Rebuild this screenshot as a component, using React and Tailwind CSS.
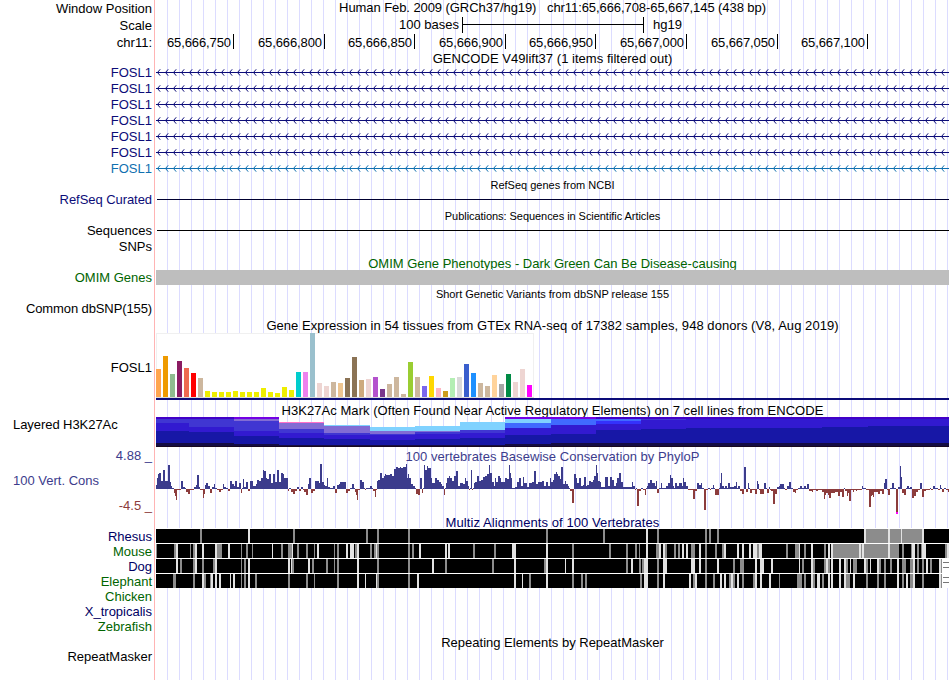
import clsx from "clsx";

const genes = ["FOSL1", "FOSL1", "FOSL1", "FOSL1", "FOSL1", "FOSL1"];

const ticks = [
    { label: "65,666,750", width: "w-[79px]" },
    { label: "65,666,800", width: "w-[91px]" },
    { label: "65,666,850", width: "w-[90px]" },
    { label: "65,666,900", width: "w-[91px]" },
    { label: "65,666,950", width: "w-[90px]" },
    { label: "65,667,000", width: "w-[91px]" },
    { label: "65,667,050", width: "w-[91px]" },
    { label: "65,667,100", width: "w-[90px]" },
];

// one [height, colour] pair per tissue
const tissues = [
    [28, "#ffa54f"], [41, "#ee9a00"], [23, "#8fbc8f"], [36, "#8b1c62"], [29, "#ee6a50"], [24, "#ff0000"], [19, "#cdb79e"],
    [6, "#eeee00"], [5, "#eeee00"], [5, "#eeee00"], [5, "#eeee00"], [6, "#eeee00"], [5, "#eeee00"], [5, "#eeee00"],
    [5, "#eeee00"], [9, "#eeee00"], [5, "#eeee00"], [4, "#eeee00"], [10, "#eeee00"], [7, "#eeee00"], [25, "#00cdcd"],
    [25, "#ee82ee"], [64, "#9ac0cd"], [14, "#eed5d2"], [11, "#eed5d2"], [15, "#cdb79e"], [14, "#eec591"], [19, "#8b7355"],
    [40, "#8b7355"], [17, "#cdaa7d"], [18, "#eed5d2"], [20, "#b452cd"], [8, "#7a378b"], [13, "#cdb79e"], [20, "#cdb79e"],
    [3, "#cdb79e"], [35, "#9acd32"], [20, "#cdb79e"], [11, "#7a67ee"], [21, "#ffd700"], [9, "#ffb6c1"], [6, "#cd9b1d"],
    [19, "#b4eeb4"], [20, "#d9d9d9"], [33, "#3a5fcd"], [24, "#1e90ff"], [14, "#cdb79e"], [11, "#cdb79e"], [22, "#ffd39b"],
    [13, "#a6a6a6"], [23, "#008b45"], [15, "#eed5d2"], [28, "#eed5d2"], [12, "#ff00ff"],
];

const VIOLET = "#4200c8";
const PURPLE = "#7400e4";
const MAUVE = "#826cd4";
const INDIGO = "#4036d2";
const BLUE = "#321ad0";
const NAVY = "#1717a6";
const DARK = "#140c44";
const SKY = "#80d2ff";
const AZURE = "#406aff";

// [start, end, ...[top, colour]]
const h3k = [
    [156, 189, [0, VIOLET], [2, INDIGO], [6, BLUE], [14, NAVY], [26, DARK]],
    [189, 234, [0, VIOLET], [2, INDIGO], [10, BLUE], [15, NAVY], [26, DARK]],
    [234, 279, [0, PURPLE], [2, MAUVE], [4, INDIGO], [14, BLUE], [19, NAVY], [27, DARK]],
    [279, 324, [5, "#ff70c8"], [6, MAUVE], [12, INDIGO], [16, BLUE], [21, NAVY], [28, DARK]],
    [324, 370, [8, SKY], [9, MAUVE], [16, INDIGO], [18, BLUE], [22, NAVY], [28, DARK]],
    [370, 415, [10, SKY], [14, MAUVE], [17, INDIGO], [18, BLUE], [23, NAVY], [28, DARK]],
    [415, 460, [9, SKY], [14, MAUVE], [15, INDIGO], [17, BLUE], [22, NAVY], [28, DARK]],
    [460, 505, [5, SKY], [13, INDIGO], [16, BLUE], [21, NAVY], [28, DARK]],
    [505, 551, [0, PURPLE], [2, SKY], [6, AZURE], [11, BLUE], [18, NAVY], [27, DARK]],
    [551, 596, [0, PURPLE], [2, AZURE], [8, BLUE], [17, NAVY], [26, DARK]],
    [596, 641, [0, VIOLET], [2, AZURE], [4, "#3432fc"], [7, BLUE], [13, NAVY], [26, DARK]],
    [641, 686, [0, VIOLET], [2, INDIGO], [3, BLUE], [12, NAVY], [26, DARK]],
    [686, 822, [0, VIOLET], [2, BLUE], [11, NAVY], [26, DARK]],
    [822, 868, [0, VIOLET], [2, BLUE], [10, NAVY], [26, DARK]],
    [868, 949, [0, VIOLET], [2, BLUE], [9, NAVY], [26, DARK]],
];

// start:score in thirds of a pixel along the axis, each score holds until the next start
const phyloLeft =
    "18:4 21:11 24:15 27:16 33:8 39:19 45:8 54:24 60:7 63:3 66:1 72:-4 75:-7 78:-11 81:-1 93:8 99:2 105:1 108:-3 114:-5 120:-1 132:2 138:4 141:14 147:2 150:-1 159:-9 162:-5 165:4 168:6 174:3 180:-4 186:2 192:5 195:1 200:-1 207:-3 213:-1 219:5 222:2 228:1 234:-2 240:8 246:5 252:3 255:8 261:2 267:6 273:-4 276:1 279:10 282:2 288:7 294:-2 300:8 309:3 318:5 321:9 327:8 333:11 339:19 342:18 348:11 351:10 357:15 363:6 369:15 375:7 381:19 387:7 393:16 399:15 402:11 414:-2 417:1 423:-3 429:-5 435:-2 441:2 447:-2 453:2 459:-1 462:-3 468:-6 474:5 477:11 483:-4 489:-2 495:8 507:6 510:25 516:7 522:4 525:3 531:11 534:2 540:1 549:3 555:-4 561:4 567:5 570:7 588:-4 594:-2 600:1 606:5 612:1 615:-3 618:-6 621:-11 624:-1 630:9 636:7 642:1 645:-1 648:1 660:3 666:1 669:-2 675:-8 678:-1 681:8 684:9 690:16 696:11 702:13 705:15 708:14 720:15 726:13 732:20 738:22 744:21 750:22 753:21 759:22 768:25 771:11 774:15 777:11 783:5 789:3 795:1 798:-5 804:-6 810:11 816:-4 819:1 822:24 825:19 831:23 834:21 843:11 846:6 855:11 861:9 867:7 873:5 876:3 882:-6 885:1 888:6 891:11 897:13 900:11 906:8 912:13 918:18 924:3 930:6 939:5 945:11 948:8 954:3 957:-1 960:1 963:19 966:-1 969:1 972:6 975:7 981:13 987:8 993:9 999:12 1005:13 1011:15 1017:24 1020:16 1026:7 1032:3 1035:11 1038:7 1044:13 1050:11 1053:7 1065:11 1071:10 1077:24 1080:16 1083:11 1086:1 1095:2 1101:7 1107:11 1113:3 1119:12 1122:6 1131:2 1137:6 1146:7 1152:18 1158:5 1164:7 1176:8 1182:3 1188:7 1194:3";
const phyloRight =
    "0:11 3:7 9:9 12:15 18:17 21:15 24:13 30:10 33:22 39:5 45:8 48:5 54:3 57:1 60:-2 66:-14 72:15 78:11 81:6 87:11 93:3 99:4 102:12 108:3 111:4 117:8 123:7 129:9 132:13 138:24 141:16 144:8 150:7 153:2 165:12 174:3 180:12 186:9 192:3 198:6 201:11 207:16 213:7 219:2 246:7 249:3 255:-1 258:1 261:-17 267:-2 273:1 279:-1 285:-6 288:1 291:3 294:6 300:9 306:6 315:3 318:8 321:-4 327:1 333:6 336:1 348:3 354:6 360:14 363:11 369:3 372:1 375:6 381:3 387:6 396:3 400:11 403:7 408:3 414:-1 429:-10 435:-2 441:6 447:4 453:6 456:1 462:-21 468:-1 474:1 480:-1 483:1 489:4 492:1 495:-6 507:1 510:6 513:16 516:3 522:1 525:3 531:1 534:6 540:2 552:3 558:7 561:1 564:3 570:-2 576:-5 582:22 588:-3 594:6 597:1 600:-4 606:-1 615:-5 621:8 624:5 627:-1 630:-5 642:6 648:1 651:-4 657:2 660:-1 663:-2 669:-15 675:-5 681:2 687:3 690:5 702:1 705:-1 711:3 717:7 723:1 729:-3 735:-4 738:-1 744:1 750:3 756:1 762:3 768:1 771:5 777:-2 786:-3 789:-1 798:-2 804:-1 816:-3 822:-10 825:-6 828:-4 834:-6 837:-9 843:-4 855:-3 864:-7 870:-3 876:-8 882:1 885:-2 891:-7 894:-4 897:-12 903:-1 909:-3 912:-1 918:-2 921:-1 936:3 939:1 948:-1 957:-18 963:-7 966:-6 969:-8 972:-3 984:-5 990:-2 996:-5 1002:6 1005:10 1011:-1 1014:-6 1020:1 1026:6 1032:1 1038:-25 1044:2 1050:23 1053:12 1056:-4 1062:-6 1068:1 1071:3 1077:1 1080:2 1086:-9 1092:-7 1098:-3 1104:-1 1110:6 1116:-8 1122:-2 1128:-1 1140:1 1143:-1 1150:3 1156:1 1164:-1 1170:4 1173:1 1176:-3 1182:1 1188:-1 1194:-3 1197:0";

function parseScores(text, origin) {
    return text.split(" ").map((item) => {
        const [x, score] = item.split(":").map(Number);
        return { x: origin + Math.round(x / 3), score };
    });
}

const phylo = [...parseScores(phyloLeft, 150), ...parseScores(phyloRight, 550)];

// start,width then g (grey) or w (near white) for every unaligned stretch
const alignments = [
    {
        name: "Rhesus",
        end: 949,
        marks: "200,2g 248,2w 293,2g 366,2g 377,2g 408,2g 546,2g 603,2g 646,2w 657,2g 705,2g 709,2g 717,2g 864,2w 866,22g 888,2w 890,11g 901,1w 902,20g 922,2w",
    },
    {
        name: "Mouse",
        end: 949,
        marks: "156,1g 174,2g 176,2w 190,1g 193,2g 195,2w 202,2w 215,2w 217,5g 228,2w 241,1g 246,2g 252,1g 272,1w 281,2g 288,4g 292,1w 297,2g 306,2g 314,1g 317,2w 334,1g 337,2g 346,2w 350,4w 355,2g 357,2w 370,2g 374,2g 376,1w 377,2g 408,2g 412,2g 419,2w 445,2w 448,2w 473,2g 494,2g 512,4w 546,2w 572,2g 609,2g 626,2g 635,2g 639,1g 646,2w 656,3g 659,2w 663,2w 665,2g 674,2g 678,2g 682,2w 686,2w 691,4g 699,2w 705,2g 715,2g 722,2g 724,2w 737,2w 742,2w 749,2w 753,4w 757,2g 759,3w 786,2g 795,4g 799,1w 804,2g 811,2w 824,2g 828,2w 831,2w 833,26g 859,2w 861,1g 862,2w 864,24g 888,2w 890,9g 902,2g 911,1g 912,3w 917,2g 921,1g 922,4w 945,2g 947,2w",
    },
    {
        name: "Dog",
        end: 942,
        marks: "176,2w 180,2g 193,2g 195,2w 202,2g 213,2g 215,2w 241,1g 244,2g 248,2w 288,2w 291,1w 292,2g 308,2w 312,2g 326,2g 334,1g 337,2g 357,2w 377,2g 408,2g 432,2w 445,2g 492,2g 514,2w 544,2g 546,2w 565,1w 572,2w 626,2g 631,2w 639,2g 642,2g 644,4w 657,2g 663,4w 691,4w 699,2w 705,2g 717,2w 733,2g 740,4g 755,2w 760,4w 771,2w 799,1w 802,2g 811,2w 813,2g 824,2g 826,2w 828,2g 831,2w 839,2w 844,2w 846,2g 850,1w 853,4g 864,2w 866,2g 870,1w 877,2w 879,2g 884,2g 890,2g 897,2w 902,4g 910,3g 913,2w 917,2g 922,2g 926,2w 930,2g 939,2w 941,1g",
    },
    {
        name: "Elephant",
        end: 942,
        marks: "173,3g 193,2g 202,2w 204,2g 210,1g 211,2w 215,2w 219,2w 230,1w 233,2w 241,1g 244,2g 248,2w 255,2g 288,2g 306,2g 314,1g 337,2g 357,2w 365,1w 376,1w 377,2g 408,2g 417,2w 514,2w 522,1w 529,2g 546,2w 572,2g 581,2g 585,2g 640,2g 644,4w 657,2g 663,2w 689,2w 693,2g 695,2w 705,2g 713,2g 720,2w 724,2w 729,2g 731,2w 733,2g 737,2w 742,2g 753,2g 755,2w 760,2w 769,2w 779,1g 797,5g 804,2g 811,2w 813,2g 817,3w 822,2g 828,2w 831,2w 839,2w 844,2w 846,4g 853,2w 866,2g 877,2g 884,2g 897,2w 902,2g 906,2w 910,3g 913,2w 922,2g 939,2w 941,1g",
    },
];

function Row({ label, labelClass, className, children }) {
    return (
        <div className={clsx("flex", className)}>
            <div className={clsx("w-[154px] shrink-0 whitespace-pre pr-[2px] text-right", labelClass)}>{label}</div>
            <div className="w-[796px] shrink-0 border-l border-[#ffb4b4] bg-[repeating-linear-gradient(90deg,#dcdcff_0_1px,transparent_1px_12px)] bg-[position:12px_0] bg-no-repeat">
                {children}
            </div>
        </div>
    );
}

function Title({ children, className }) {
    return <div className={clsx("whitespace-pre text-center", className)}>{children}</div>;
}

function Introns() {
    let chevrons = "";
    for (let x = 157; x < 947; x += 8) {
        chevrons += `M${x + 3.2} 5.3L${x + 0.5} 8.5L${x + 3.2} 11.7`;
    }
    return (
        <svg className="block h-4 w-[794px]" viewBox="155 0 794 16" fill="none" stroke="currentColor">
            <path d="M156 8.5H949" />
            <path d={chevrons} />
        </svg>
    );
}

function Expression() {
    return (
        <svg className="block h-[67px] w-[794px]" viewBox="155 0 794 67" shapeRendering="crispEdges">
            <rect x="156" y="0" width="378" height="65" fill="#f0f0f0" />
            <rect x="157" y="1" width="376" height="63" fill="#fff" />
            <rect x="156" y="64" width="378" height="1" fill="#d8d8d8" />
            {tissues.map(([height, color], i) => (
                <rect key={i} x={156 + i * 7} y={64 - height} width="5" height={height} fill={color} />
            ))}
            <rect x="156" y="65" width="793" height="2" fill="#0c0c78" />
        </svg>
    );
}

function Histone() {
    return (
        <svg className="mt-px block h-[30px] w-[794px]" viewBox="155 0 794 30" shapeRendering="crispEdges">
            {h3k.map(([start, end, ...layers]) =>
                layers.map(([top, color]) => (
                    <rect key={`${start}-${top}`} x={start} y={top} width={end - start} height={30 - top} fill={color} />
                ))
            )}
            <rect x="156" y="29" width="793" height="1" fill="#180820" />
        </svg>
    );
}

function Conservation() {
    return (
        <svg className="block h-[52px] w-[794px]" viewBox="155 0 794 52" shapeRendering="crispEdges">
            {phylo.slice(0, -1).map(({ x, score }, i) => (
                <rect
                    key={i}
                    x={x}
                    y={score > 0 ? 27 - score : 27}
                    width={phylo[i + 1].x - x}
                    height={Math.abs(score)}
                    fill={score > 0 ? "#3c3c8c" : "#8c3c3c"}
                />
            ))}
            <rect x="896" y="50" width="2" height="2" fill="#ff00ff" />
        </svg>
    );
}

function Alignment({ marks, end }) {
    return (
        <svg className="block h-[15px] w-[794px]" viewBox="155 0 794 15" shapeRendering="crispEdges">
            <rect x="156" y="0" width={end - 156} height="15" fill="#fff" />
            <rect x="156" y="1" width={end - 156} height="14" fill="#000" />
            {marks.split(" ").map((mark) => {
                const [x, width] = mark.split(",");
                return (
                    <rect key={mark} x={x} y="1" width={parseInt(width)} height="14" fill={mark.endsWith("g") ? "#8c8c8c" : "#e2e2e2"} />
                );
            })}
            {end < 949 && (
                <>
                    <rect x={end} y="0" width={949 - end} height="15" fill="#fff" />
                    <path d="M943 4.5H949M943 9.5H949" stroke="#777" />
                </>
            )}
        </svg>
    );
}

export default function App() {
    return (
        <div className="h-[680px] w-[950px] overflow-hidden bg-white font-['Liberation_Sans',Arial,sans-serif] text-[13px] leading-[18px] text-black">
            <Row label="Window Position" className="h-[17px]">
                <Title className="leading-4 tracking-[-0.075px]">{"Human Feb. 2009 (GRCh37/hg19)   chr11:65,666,708-65,667,145 (438 bp)"}</Title>
            </Row>
            <Row label="Scale" className="h-4">
                <div className="flex leading-4">
                    <div className="w-[304px] text-right">100 bases</div>
                    <svg className="ml-[3px] h-4 w-[182px]" viewBox="0 0 182 16" stroke="#000" fill="none">
                        <path d="M0.5 0V16M181.5 0V16M0 7.5H182" />
                    </svg>
                    <div className="ml-[9px]">hg19</div>
                </div>
            </Row>
            <Row label="chr11:" labelClass="pt-px" className="h-[17px]">
                <div className="flex pt-px leading-[18px] tracking-[-0.1px]">
                    {ticks.map((tick) => (
                        <div key={tick.label} className={clsx("h-[15px] shrink-0 border-r border-black pr-[2px] text-right", tick.width)}>
                            {tick.label}
                        </div>
                    ))}
                </div>
            </Row>
            <Row className="h-[14px]">
                <Title className="tracking-[0.03px]">GENCODE V49lift37 (1 items filtered out)</Title>
            </Row>
            {genes.map((gene, i) => (
                <Row key={i} label={gene} className="h-4 text-[#0c0c78]">
                    <Introns />
                </Row>
            ))}
            <Row label="FOSL1" className="h-4 text-[#1070b0]">
                <Introns />
            </Row>

            <Row className="h-[15px]">
                <Title className="pt-px text-[11px] leading-4">RefSeq genes from NCBI</Title>
            </Row>
            <Row label="RefSeq Curated" labelClass="text-[#0c0c78] tracking-[-0.06px]" className="h-4">
                <div className="ml-[2px] mr-px h-[9px] border-b border-[#000030]" />
            </Row>
            <Row className="h-[15px]">
                <Title className="pt-px text-[11px] leading-4 tracking-[-0.05px]">Publications: Sequences in Scientific Articles</Title>
            </Row>
            <Row label="Sequences" className="h-4">
                <div className="ml-[2px] mr-px h-[9px] border-b border-black" />
            </Row>
            <Row label="SNPs" className="h-[17px]" />

            <Row className="h-[14px]">
                <Title className="text-[#006400]">OMIM Gene Phenotypes - Dark Green Can Be Disease-causing</Title>
            </Row>
            <Row label="OMIM Genes" labelClass="text-[#006400]" className="h-[17px]">
                <div className="ml-px mr-px mt-px h-[15px] bg-[#bebebe]" />
            </Row>
            <Row className="h-[14px]">
                <Title className="text-[11px] leading-4">Short Genetic Variants from dbSNP release 155</Title>
            </Row>
            <Row label="Common dbSNP(155)" labelClass="tracking-[-0.11px]" className="h-[17px]" />

            <Row className="h-4">
                <Title className="tracking-[0.055px]">Gene Expression in 54 tissues from GTEx RNA-seq of 17382 samples, 948 donors (V8, Aug 2019)</Title>
            </Row>
            <Row label="FOSL1" labelClass="pt-[26px]" className="h-[69px]">
                <Expression />
            </Row>

            <Row className="h-[14px]">
                <Title className="tracking-[0.05px]">H3K27Ac Mark (Often Found Near Active Regulatory Elements) on 7 cell lines from ENCODE</Title>
            </Row>
            <Row label="Layered H3K27Ac" labelClass="pl-[13px] tracking-[-0.06px] !text-left" className="h-8">
                <Histone />
            </Row>

            <Row label="4.88 _" labelClass="-mt-px" className="h-[14px] text-[#3c3c8c]">
                <Title className="tracking-[0.045px]">100 vertebrates Basewise Conservation by PhyloP</Title>
            </Row>
            <Row
                className="h-[52px]"
                label={
                    <div className="flex flex-col gap-[7px] pt-[10px]">
                        <span className="pl-[13px] text-left text-[#3c3c8c]">100 Vert. Cons</span>
                        <span className="text-[#8c3c3c]">-4.5 _</span>
                    </div>
                }
            >
                <Conservation />
            </Row>

            <Row className="h-[14px]">
                <Title className="tracking-[0.08px] text-[#000064]">Multiz Alignments of 100 Vertebrates</Title>
            </Row>
            {alignments.map((species, i) => (
                <Row key={species.name} label={species.name} labelClass={i % 2 ? "text-[#006400]" : "text-[#000064]"} className="h-[15px]">
                    <Alignment marks={species.marks} end={species.end} />
                </Row>
            ))}
            <Row label="Chicken" labelClass="text-[#006400]" className="h-[15px]" />
            <Row label="X_tropicalis" labelClass="text-[#000064]" className="h-[15px]" />
            <Row label="Zebrafish" labelClass="text-[#006400]" className="h-4" />

            <Row className="h-[14px]">
                <Title>Repeating Elements by RepeatMasker</Title>
            </Row>
            <Row label="RepeatMasker" className="h-8" />
        </div>
    );
}
